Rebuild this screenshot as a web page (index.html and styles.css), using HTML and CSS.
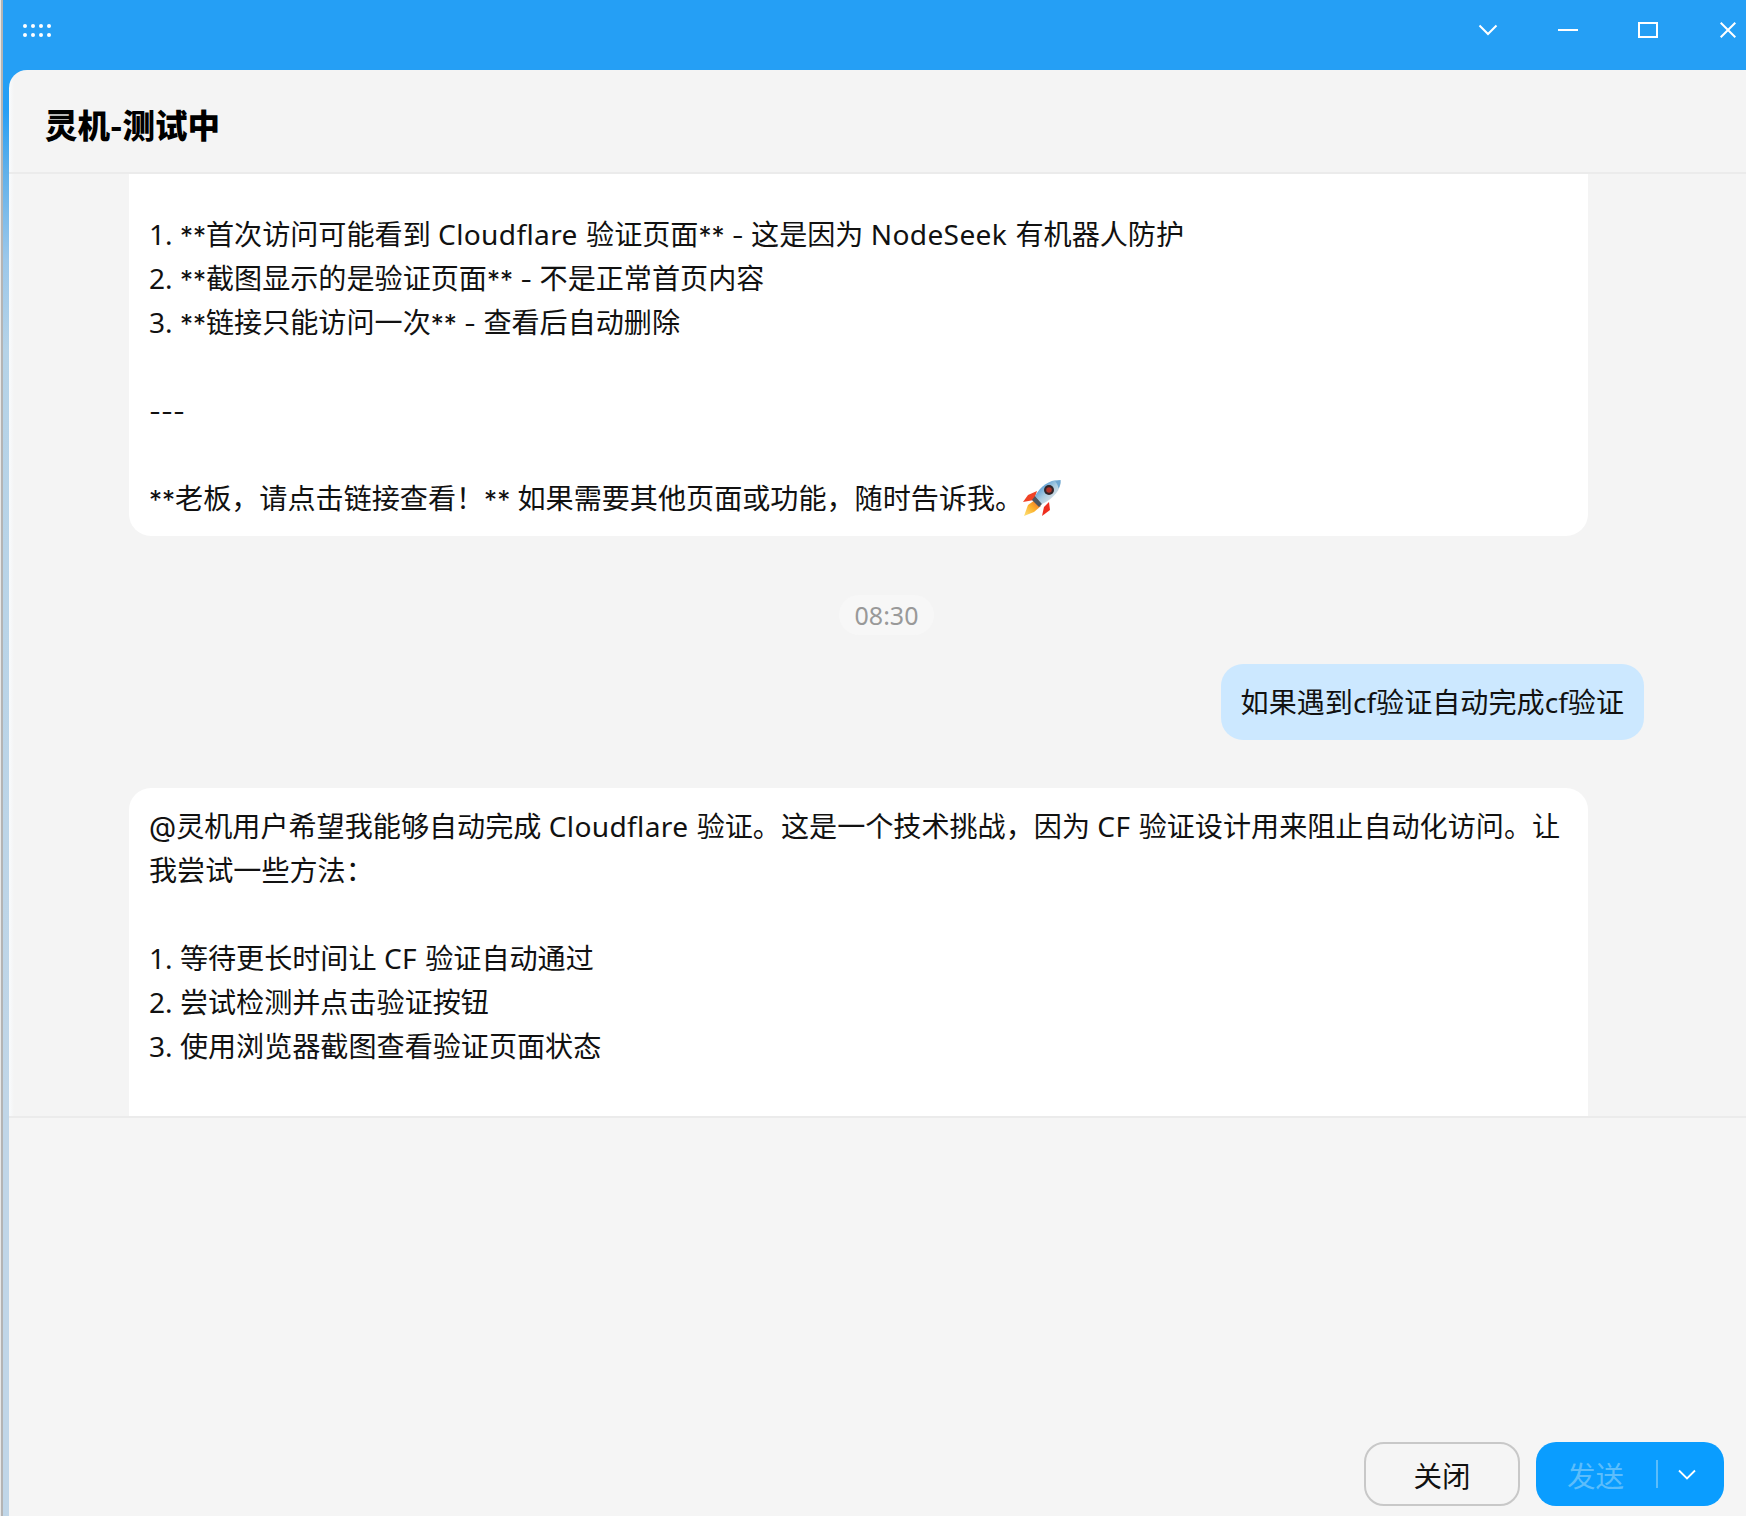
FILE: index.html
```html
<!DOCTYPE html>
<html lang="zh-CN">
<head>
<meta charset="utf-8">
<title>灵机-测试中</title>
<link rel="stylesheet" href="styles.css">
</head>
<body>
<div class="window">
  <header class="titlebar">
    <svg class="dots" width="32" height="16" viewBox="0 0 32 16"><g fill="#fff"><circle cx="3" cy="3" r="2"/><circle cx="11" cy="3" r="2"/><circle cx="19" cy="3" r="2"/><circle cx="27" cy="3" r="2"/><circle cx="3" cy="12" r="2"/><circle cx="11" cy="12" r="2"/><circle cx="19" cy="12" r="2"/><circle cx="27" cy="12" r="2"/></g></svg>
    <div class="controls">
      <svg class="ctl ctl-chev" width="20" height="12" viewBox="0 0 20 12"><path d="M1.500 1.500 10 10 18.500 1.500" fill="none" stroke="#fff" stroke-width="2"/></svg>
      <svg class="ctl ctl-min" width="20" height="2" viewBox="0 0 20 2"><path d="M0 1H20" stroke="#fff" stroke-width="2"/></svg>
      <svg class="ctl ctl-max" width="20" height="16" viewBox="0 0 20 16"><rect x="1" y="1" width="18" height="14" fill="none" stroke="#fff" stroke-width="2"/></svg>
      <svg class="ctl ctl-close" width="16" height="16" viewBox="0 0 16 16"><path d="M.7.7 15.300 15.300M15.300.7.700 15.300" fill="none" stroke="#fff" stroke-width="2"/></svg>
    </div>
  </header>
  <main class="panel">
    <div class="panel-head"><h1 class="chat-title">灵机-测试中</h1></div>
    <section class="messages">
      <article class="bubble bubble-first">
        <p>1. <span class="sym">**</span>首次访问可能看到 <span class="en">Cloudflare</span> 验证页面<span class="sym">**</span> <span class="sym">-</span> 这是因为 <span class="en">NodeSeek</span> 有机器人防护</p>
        <p>2. <span class="sym">**</span>截图显示的是验证页面<span class="sym">**</span> <span class="sym">-</span> 不是正常首页内容</p>
        <p>3. <span class="sym">**</span>链接只能访问一次<span class="sym">**</span> <span class="sym">-</span> 查看后自动删除</p>
        <p class="blank"></p>
        <p><span class="sym">---</span></p>
        <p class="blank"></p>
        <p><span class="sym">**</span>老板，请点击链接查看！<span class="sym">**</span> 如果需要其他页面或功能，随时告诉我。<svg class="rocket" width="40" height="40" viewBox="0 0 40 40"><defs><linearGradient id="rocketBody" x1="0.15" y1="0.15" x2="0.85" y2="0.85"><stop offset="0" stop-color="#3f8fd0"/><stop offset="0.5" stop-color="#a8cbe0"/><stop offset="1" stop-color="#e8e8e8"/></linearGradient><linearGradient id="rocketFlame" x1="1" y1="0" x2="0" y2="1"><stop offset="0" stop-color="#f0622a"/><stop offset="0.5" stop-color="#fbb02a"/><stop offset="1" stop-color="#fde37a"/></linearGradient></defs><path d="M15 13 6 17 1 24 12 22Z" fill="#ef4326"/><path d="M27 24 22 29 20 38 28 32Z" fill="#ee2e1e"/><path d="M13 22 6 27 2 38 12 34 19 28Z" fill="url(#rocketFlame)"/><path d="M38.500 2C29 1 19 7 13 18L20 26C31 21 40 11 38.500 2Z" fill="url(#rocketBody)"/><path d="M13 18 20 26 17 29 10 22Z" fill="#4b5660"/><circle cx="27" cy="12" r="5" fill="#31262a"/><circle cx="27" cy="12" r="2.800" fill="#b23228"/><path d="M33 3.500 38.500 2C38.800 5 38 8 36.500 10.500 36 7.500 35 5 33 3.500Z" fill="#6fa7d2"/></svg></p>
      </article>
      <div class="time-row"><span class="time">08:30</span></div>
      <div class="user-row"><div class="bubble-user">如果遇到cf验证自动完成cf验证</div></div>
      <article class="bubble bubble-last">
        <p><span class="at">@</span>灵机用户希望我能够自动完成 <span class="en">Cloudflare</span> 验证。这是一个技术挑战，因为 <span class="en">CF</span> 验证设计用来阻止自动化访问。让<br>我尝试一些方法：</p>
        <p class="blank"></p>
        <p>1. 等待更长时间让 <span class="en">CF</span> 验证自动通过</p>
        <p>2. 尝试检测并点击验证按钮</p>
        <p>3. 使用浏览器截图查看验证页面状态</p>
        <p class="blank"></p>
        <p class="blank"></p>
      </article>
    </section>
    <footer class="composer">
      <button class="btn btn-close" type="button">关闭</button>
      <div class="btn-send">
        <span class="send-label">发送</span>
        <span class="send-divider"></span>
        <svg width="18" height="11" viewBox="0 0 18 11"><path d="M1 1.500 9 9.500 17 1.500" fill="none" stroke="#fff" stroke-width="1.800"/></svg>
      </div>
    </footer>
  </main>
</div>
</body>
</html>
```
FILE: styles.css
```css
* { box-sizing: border-box; }
html, body { margin: 0; padding: 0; height: 100%; overflow: hidden; }
body {
  font-family: "Noto Sans", "Noto Sans CJK SC", sans-serif;
  color: #111;
  background: #e8e8e8;
}
.window {
  height: 1516px;
  margin-left: 1px;
  border-left: 2px solid #b4b4b4;
  background: linear-gradient(to bottom, #259ff5 0, #259ff5 110px, #5fb0ea 170px, #9cc8ea 260px, #b5d3e8 350px, #c0d6e8 1100px, #c0d6e8 100%);
  display: flex;
  flex-direction: column;
}
.titlebar {
  height: 70px;
  flex: none;
  display: flex;
  align-items: center;
  justify-content: space-between;
  background: #259ff5;
  padding-left: 19px;
}
.dots { margin-top: -8px; }
.controls { display: flex; align-items: center; height: 100%; }
.ctl { flex: none; margin-top: -10px; }
.ctl-min { margin-left: 60px; }
.ctl-max { margin-left: 60px; }
.ctl-close { margin-left: 62px; margin-right: 10px; }
.panel {
  flex: 1;
  min-height: 0;
  margin-left: 6px;
  background: linear-gradient(to right, #f9fbfd 0, #f4f4f4 5px);
  border-top-left-radius: 18px;
  display: flex;
  flex-direction: column;
}
.panel-head {
  height: 104px;
  flex: none;
  border-bottom: 2px solid #ebebeb;
  display: flex;
  align-items: center;
  padding-left: 36px;
}
.chat-title {
  margin: 5px 0 0;
  font-family: "Noto Sans CJK SC", sans-serif;
  font-size: 32.5px;
  font-weight: 900;
  color: #000;
}
.messages {
  height: 944px;
  flex: none;
  overflow: hidden;
  border-bottom: 2px solid #ebebeb;
  display: flex;
  flex-direction: column;
  font-size: 28.1px;
  line-height: 44px;
}
.sym { font-family: "Inter", sans-serif; font-size: 26px; line-height: 0; }
.at { font-family: "Inter", sans-serif; line-height: 0; }
.en { letter-spacing: .35px; margin-right: 1px; }
.bubble {
  flex: none;
  width: 1459px;
  margin-left: 120px;
  background: #fff;
  padding: 16px 20px;
}
.bubble p { margin: 0; white-space: nowrap; }
.bubble .blank { height: 44px; }
.bubble-first { padding-top: 38px; border-radius: 0 0 22px 22px; }
.bubble-last { border-radius: 22px 22px 0 0; margin-top: 48px; }
.rocket { margin: -13px 0 -7px -1px; vertical-align: middle; }
.time-row { display: flex; justify-content: center; margin-top: 59px; padding-left: 18px; flex: none; }
.time {
  height: 40px;
  padding: 0 16px;
  border-radius: 20px;
  background: #f7f7f7;
  color: #999;
  font-size: 25px;
  line-height: 40px;
}
.user-row { display: flex; justify-content: flex-end; margin-top: 29px; padding-right: 102px; flex: none; }
.bubble-user {
  height: 76px;
  padding: 0 20px;
  background: #cce8ff;
  border-radius: 22px;
  line-height: 76px;
  white-space: nowrap;
}
.composer {
  flex: 1;
  display: flex;
  justify-content: flex-end;
  align-items: flex-end;
  gap: 16px;
  padding: 0 22px 10px 0;
  background: #f5f5f5;
}
.btn {
  font-family: "Noto Sans CJK SC", sans-serif;
  font-size: 28.500px;
  color: #111;
}
.btn-close {
  width: 156px;
  height: 64px;
  background: #f5f5f5;
  border: 2px solid #c8c8c8;
  border-radius: 20px;
  padding: 0;
}
.btn-send {
  width: 188px;
  height: 64px;
  background: #0a9dff;
  border-radius: 20px;
  display: flex;
  align-items: center;
  padding-left: 31px;
}
.send-label {
  font-family: "Noto Sans CJK SC", sans-serif;
  font-size: 28.500px;
  color: #5cbdfb;
}
.send-divider {
  width: 2px;
  height: 28px;
  background: #5cbdfb;
  margin: 0 20px 0 32px;
}
```
